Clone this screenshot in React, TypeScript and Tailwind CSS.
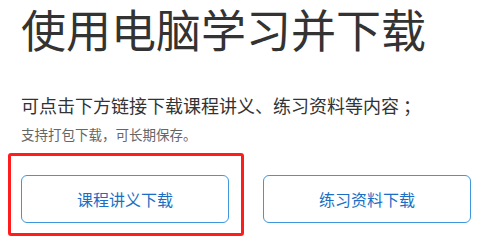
import React from "react";

export default function App() {
  return (
    <div
      className="w-[495px] h-[240px] bg-white overflow-hidden px-[21px]"
      style={{ fontFamily: '"Microsoft YaHei", "Noto Sans CJK SC", "Noto Sans", sans-serif' }}
    >
      <h1 className="mt-[-4px] text-[45px] leading-[66px] text-[#333333] font-normal">
        使用电脑学习并下载
      </h1>
      <p className="mt-[31px] text-[18px] leading-[24px] text-[#333333]">
        可点击下方链接下载课程讲义、练习资料等内容<span className="ml-[4px]">；</span>
      </p>
      <p className="mt-[7px] text-[13.5px] leading-[20px] text-[#666666]">
        支持打包下载，可长期保存。
      </p>
      <div className="mt-[31px] flex gap-[34px]">
        <div className="relative">
          <button className="w-[208px] h-[48px] border border-[#3f97dd] rounded-[6px] bg-white text-[16px] text-[#1a6fc4] flex items-center justify-center">
            课程讲义下载
          </button>
          <div className="absolute left-[-13px] top-[-22px] right-[-15px] bottom-[-13px] border-[3px] border-[#ff1c1c] rounded-[3px] pointer-events-none" />
        </div>
        <button className="w-[208px] h-[48px] border border-[#3f97dd] rounded-[6px] bg-white text-[16px] text-[#1a6fc4] flex items-center justify-center">
          练习资料下载
        </button>
      </div>
    </div>
  );
}
